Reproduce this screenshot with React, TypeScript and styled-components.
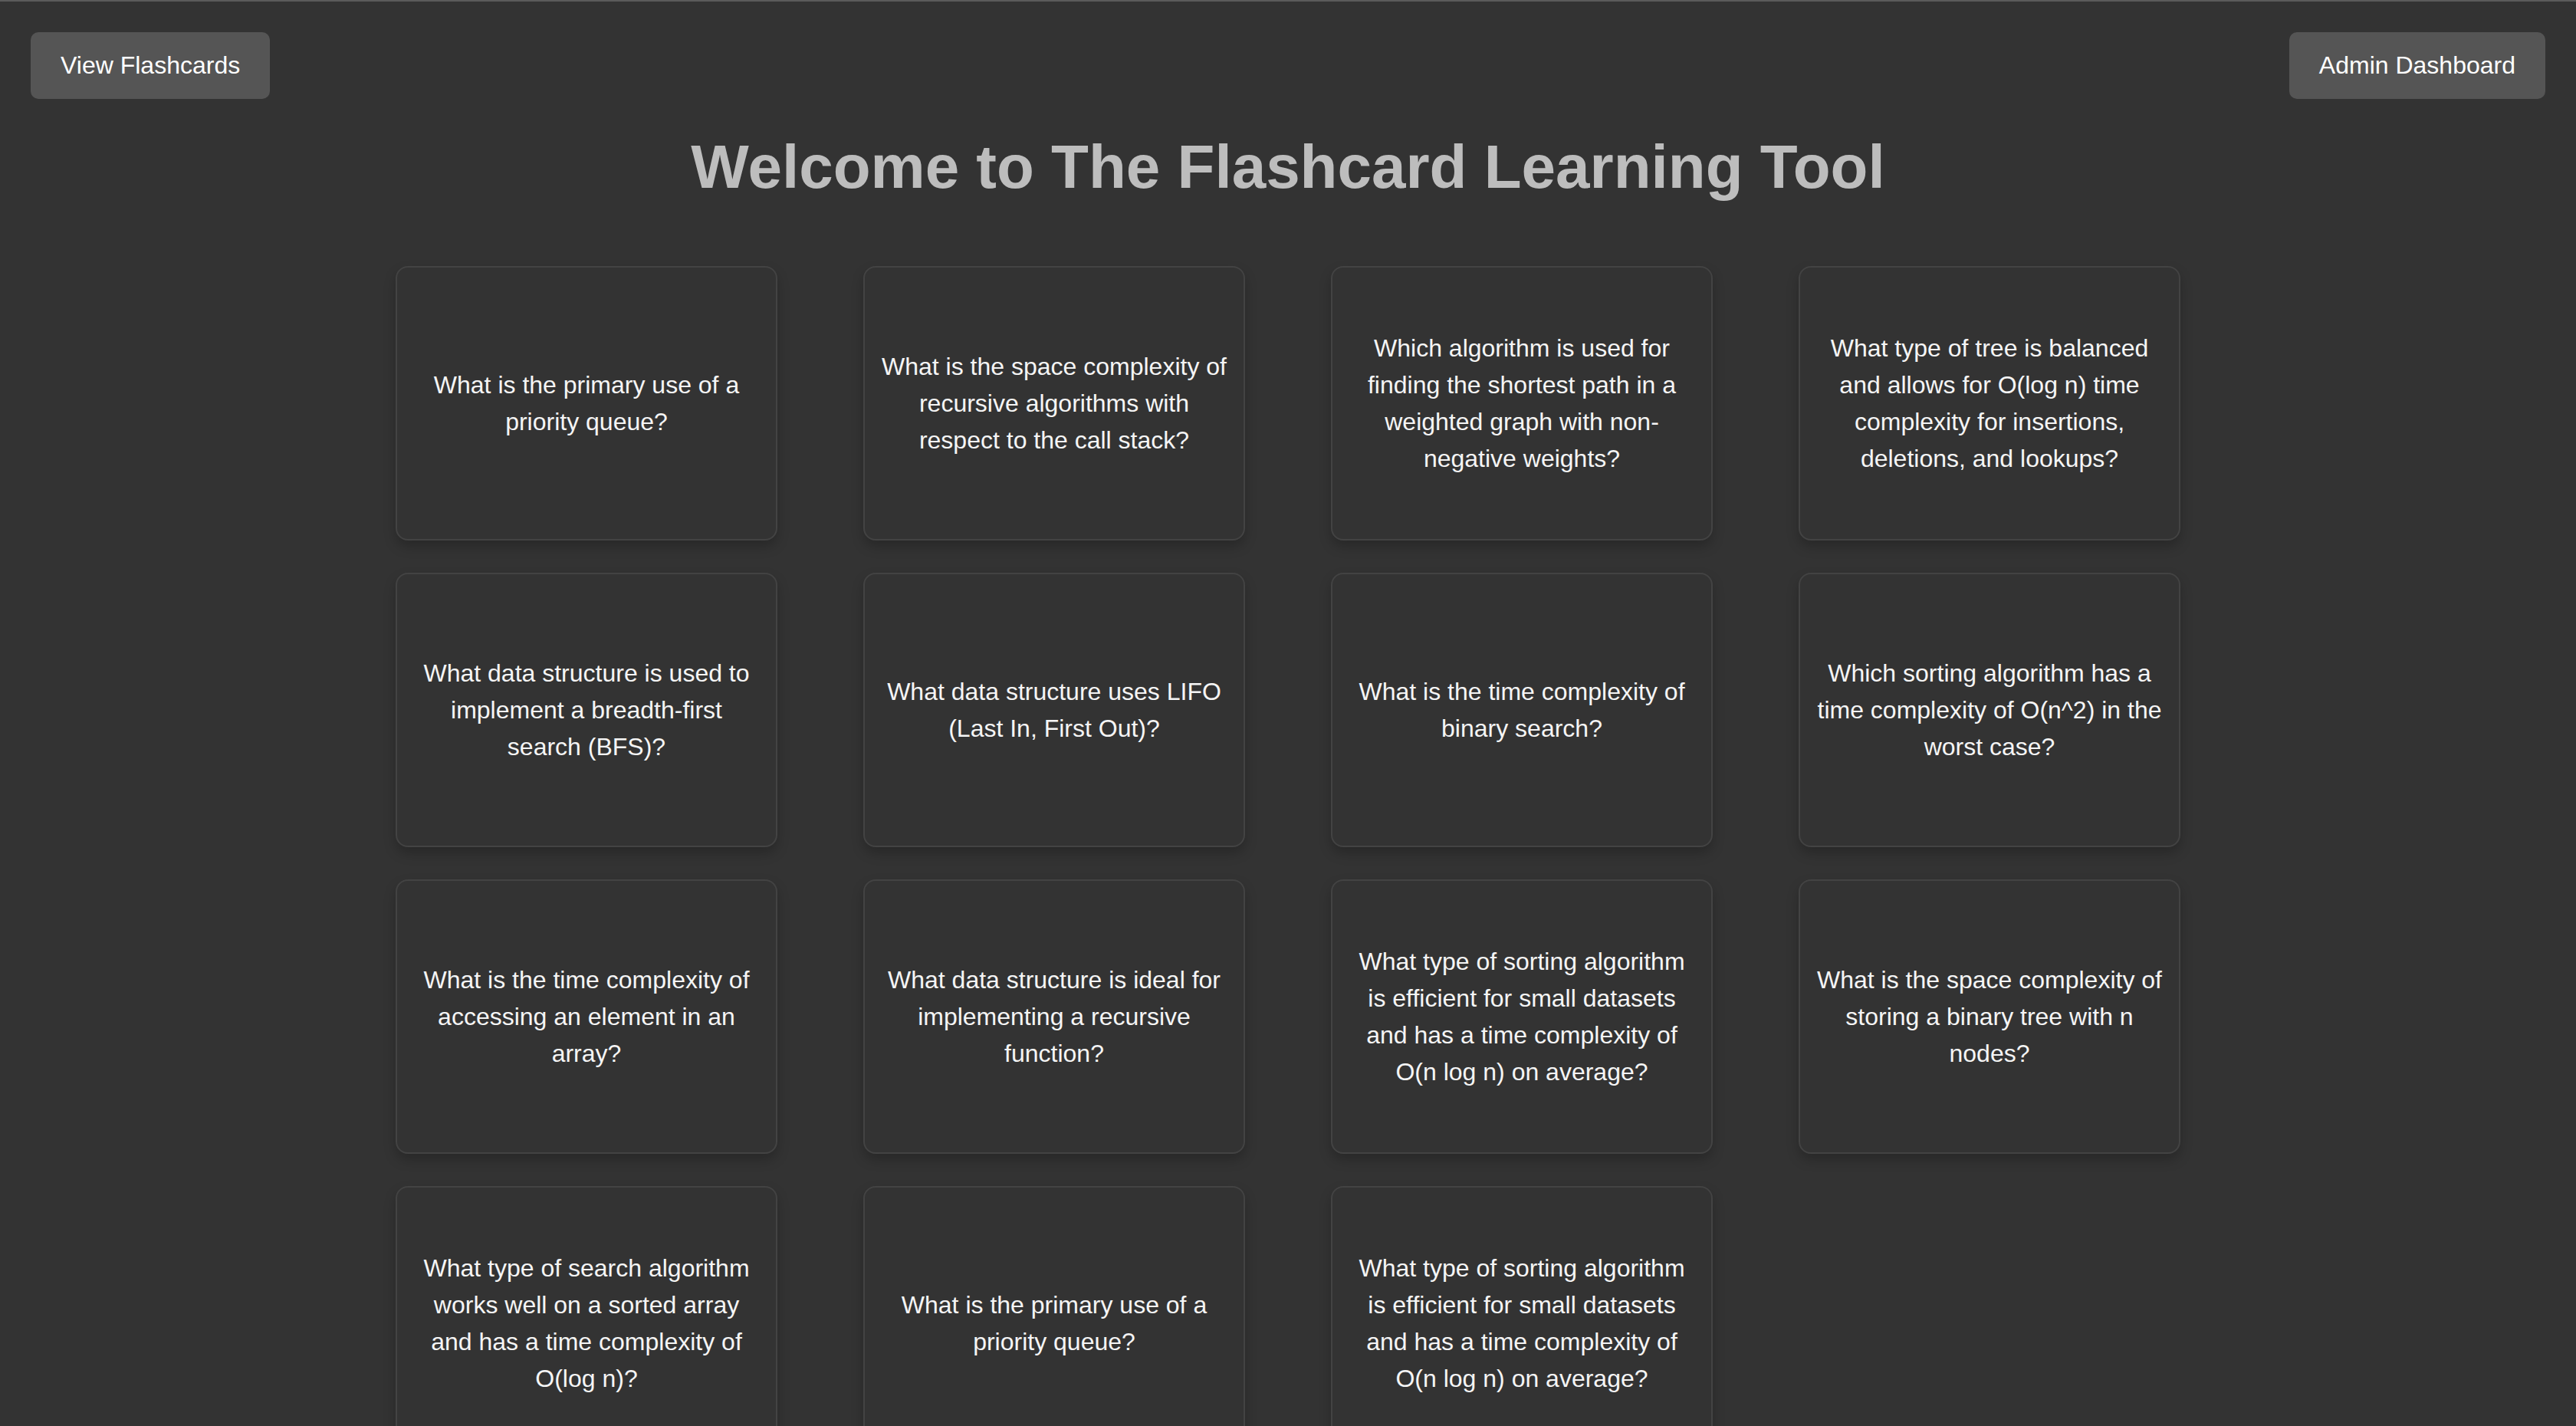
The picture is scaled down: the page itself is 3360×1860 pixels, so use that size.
import React from "react";
import styled, { createGlobalStyle } from "styled-components";

const GlobalStyle = createGlobalStyle`
  html, body {
    margin: 0;
    padding: 0;
    background: #333333;
  }
  body {
    border-top: 2px solid #5b5b5b;
    font-family: "Liberation Sans", Arial, sans-serif;
    min-height: 1858px;
    box-sizing: border-box;
  }
`;

const Page = styled.div`
  display: flex;
  flex-direction: column;
  align-items: center;
  padding: 40px 40px 0;
`;

const Nav = styled.nav`
  align-self: stretch;
  display: flex;
  justify-content: space-between;
  align-items: center;
`;

const NavButton = styled.button`
  font-family: "Liberation Sans", Arial, sans-serif;
  font-size: 32px;
  line-height: 37px;
  color: #ffffff;
  background: #555555;
  border: none;
  border-radius: 10px;
  padding: 25px 39px;
  cursor: pointer;
`;

const Title = styled.h1`
  margin: 43px 0 0;
  font-size: 80px;
  line-height: 92px;
  font-weight: 700;
  color: #bdbdbd;
  text-align: center;
`;

const Grid = styled.div`
  margin-top: 83px;
  display: grid;
  grid-template-columns: repeat(4, 498px);
  column-gap: 112px;
  row-gap: 42px;
`;

const Card = styled.div`
  box-sizing: border-box;
  height: 358px;
  border: 2px solid #434343;
  border-radius: 16px;
  background: #333333;
  box-shadow: 0 8px 16px rgba(0, 0, 0, 0.22);
  padding: 20px;
  display: flex;
  align-items: center;
  justify-content: center;
  text-align: center;
`;

const Question = styled.p`
  margin: 0;
  font-size: 32px;
  line-height: 48px;
  color: #f5f5f5;
`;

const questions = [
  "What is the primary use of a priority queue?",
  "What is the space complexity of recursive algorithms with respect to the call stack?",
  "Which algorithm is used for finding the shortest path in a weighted graph with non-negative weights?",
  "What type of tree is balanced and allows for O(log n) time complexity for insertions, deletions, and lookups?",
  "What data structure is used to implement a breadth-first search (BFS)?",
  "What data structure uses LIFO (Last In, First Out)?",
  "What is the time complexity of binary search?",
  "Which sorting algorithm has a time complexity of O(n^2) in the worst case?",
  "What is the time complexity of accessing an element in an array?",
  "What data structure is ideal for implementing a recursive function?",
  "What type of sorting algorithm is efficient for small datasets and has a time complexity of O(n log n) on average?",
  "What is the space complexity of storing a binary tree with n nodes?",
  "What type of search algorithm works well on a sorted array and has a time complexity of O(log n)?",
  "What is the primary use of a priority queue?",
  "What type of sorting algorithm is efficient for small datasets and has a time complexity of O(n log n) on average?",
];

export default function App() {
  return (
    <>
      <GlobalStyle />
      <Page>
        <Nav>
          <NavButton>View Flashcards</NavButton>
          <NavButton>Admin Dashboard</NavButton>
        </Nav>
        <Title>Welcome to The Flashcard Learning Tool</Title>
        <Grid>
          {questions.map((q, i) => (
            <Card key={i}>
              <Question>{q}</Question>
            </Card>
          ))}
        </Grid>
      </Page>
    </>
  );
}
